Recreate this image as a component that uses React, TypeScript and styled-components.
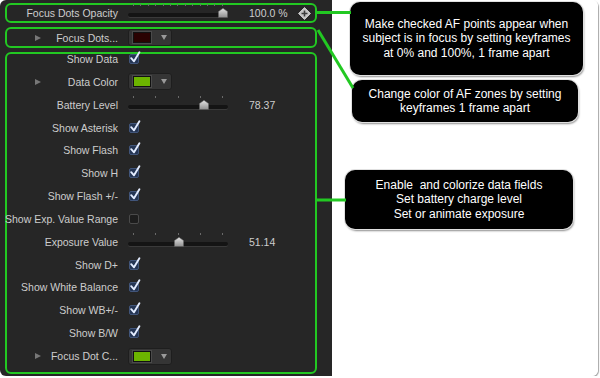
import React from "react";
import styled, { createGlobalStyle } from "styled-components";

const GREEN = "#22c822";

const GlobalStyle = createGlobalStyle`
  body {
    margin: 0;
    background: #fff;
    font-family: "Liberation Sans", Arial, sans-serif;
  }
`;

type TRow =
  | { label: string; kind: "check"; on: boolean }
  | { label: string; kind: "color"; color: string }
  | { label: string; kind: "slider"; value: number; ticks: number; text: string };

const dataRows: TRow[] = [
  { label: "Show Data", kind: "check", on: true },
  { label: "Data Color", kind: "color", color: "#6cb400" },
  { label: "Battery Level", kind: "slider", value: 78.37, ticks: 5, text: "78.37" },
  { label: "Show Asterisk", kind: "check", on: true },
  { label: "Show Flash", kind: "check", on: true },
  { label: "Show H", kind: "check", on: true },
  { label: "Show Flash +/-", kind: "check", on: true },
  { label: "Show Exp. Value Range", kind: "check", on: false },
  { label: "Exposure Value", kind: "slider", value: 51.14, ticks: 5, text: "51.14" },
  { label: "Show D+", kind: "check", on: true },
  { label: "Show White Balance", kind: "check", on: true },
  { label: "Show WB+/-", kind: "check", on: true },
  { label: "Show B/W", kind: "check", on: true },
  { label: "Focus Dot C...", kind: "color", color: "#6cb400" },
];

const Slider = ({ value, ticks }: { value: number; ticks: number }) => (
  <SliderWrap>
    <Ticks>
      {Array.from({ length: ticks }).map((_, i) => (
        <Tick key={"tick_" + i} />
      ))}
    </Ticks>
    <Track />
    <Thumb style={{ left: value * 0.9 }} viewBox="0 0 10 10" width={10} height={10}>
      <defs>
        <linearGradient id="thumbGrad" x1="0" y1="0" x2="0" y2="1">
          <stop offset="0" stopColor="#e4e4e4" />
          <stop offset="1" stopColor="#8e8e8e" />
        </linearGradient>
      </defs>
      <path d="M5 0.3 L9.6 3.6 V9.6 H0.4 V3.6 Z" fill="url(#thumbGrad)" stroke="#555" strokeWidth="0.5" />
    </Thumb>
  </SliderWrap>
);

const Checkbox = ({ on }: { on: boolean }) => (
  <CheckBox on={on}>
    {on && (
      <CheckMark viewBox="0 0 12 13" width={12} height={13}>
        <path d="M2.2 7.2 L5 10.3 L10.4 1.2" fill="none" stroke="#e3ecff" strokeWidth="1.9" strokeLinecap="round" strokeLinejoin="round" />
      </CheckMark>
    )}
  </CheckBox>
);

const ColorWell = ({ color }: { color: string }) => (
  <Well>
    <Swatch color={color} />
    <DropArrow />
  </Well>
);

const KeyframeButton = () => (
  <KeyIcon viewBox="0 0 13 13" width={13} height={13}>
    <path d="M6.5 0.5 L12.5 6.5 L6.5 12.5 L0.5 6.5 Z" fill="#c4c4c4" stroke="#c4c4c4" strokeLinejoin="round" />
    <path d="M6.5 3.5 V9.5 M3.5 6.5 H9.5" stroke="#3a3a3a" strokeWidth="1.6" />
  </KeyIcon>
);

const Control = ({ row }: { row: TRow }) => {
  if (row.kind === "check") return <Checkbox on={row.on} />;
  if (row.kind === "color") return <ColorWell color={row.color} />;
  return (
    <>
      <Slider value={row.value} ticks={row.ticks} />
      <Value>{row.text}</Value>
    </>
  );
};

const App = () => {
  return (
    <>
      <GlobalStyle />
      <Card>
        <Panel>
          <Group height={20}>
            <Row height={16}>
              <Label>Focus Dots Opacity</Label>
              <Controls>
                <Slider value={100} ticks={13} />
                <Value>100.0 %</Value>
                <KeyframeButton />
              </Controls>
            </Row>
          </Group>
          <Group height={21} top={4}>
            <Row height={17}>
              <Label>
                <Disclosure />
                Focus Dots...
              </Label>
              <Controls>
                <ColorWell color="#2a0202" />
              </Controls>
            </Row>
          </Group>
          <Group height={322} top={4}>
            <RowList>
              {dataRows.map(row => (
                <Row height={22.85} key={"data_row_" + row.label}>
                  <Label>
                    {row.kind === "color" && <Disclosure />}
                    {row.label}
                  </Label>
                  <Controls>
                    <Control row={row} />
                  </Controls>
                </Row>
              ))}
            </RowList>
          </Group>
        </Panel>
        <Notes>
          <Callout width={233} height={73} left={18} top={2}>
            Make checked AF points appear when
            <br />
            subject is in focus by setting keyframes
            <br />
            at 0% and 100%, 1 frame apart
          </Callout>
          <Callout width={226} height={42} left={20} top={5}>
            Change color of AF zones by setting
            <br />
            keyframes 1 frame apart
          </Callout>
          <Callout width={228} height={59} left={13} top={48}>
            {"Enable\u00a0 and colorize data fields"}
            <br />
            Set battery charge level
            <br />
            Set or animate exposure
          </Callout>
        </Notes>
        <Leaders width={598} height={376}>
          <line x1="316" y1="12.5" x2="351" y2="12.5" stroke={GREEN} strokeWidth="3" />
          <line x1="318" y1="30" x2="353" y2="88" stroke={GREEN} strokeWidth="3" />
          <line x1="316" y1="200" x2="346" y2="200" stroke={GREEN} strokeWidth="3" />
        </Leaders>
      </Card>
    </>
  );
};

const Card = styled.div`
  position: relative;
  display: flex;
  width: 598px;
  height: 376px;
  border-radius: 6px;
  overflow: hidden;
  box-shadow: 1px 1px 1px rgba(0, 0, 0, 0.35);
`;

const Panel = styled.div`
  width: 332px;
  flex-shrink: 0;
  box-sizing: border-box;
  padding: 3px 0 0 5px;
  background: #262626;
  display: flex;
  flex-direction: column;
`;

const Group = styled.div<{ height: number; top?: number }>`
  box-sizing: border-box;
  width: 312px;
  height: ${p => p.height}px;
  margin-top: ${p => p.top || 0}px;
  border: 2px solid ${GREEN};
  border-radius: 6px;
`;

const RowList = styled.div`
  margin-top: -6.4px;
  display: flex;
  flex-direction: column;
`;

const Row = styled.div<{ height: number }>`
  display: grid;
  grid-template-columns: 111px 1fr;
  column-gap: 10px;
  align-items: center;
  height: ${p => p.height}px;
  font-size: 10.5px;
  color: #cdcdcd;
`;

const Label = styled.div`
  display: flex;
  align-items: center;
  justify-content: flex-end;
  white-space: nowrap;
  position: relative;
`;

const Disclosure = styled.span`
  width: 0;
  height: 0;
  border-left: 6px solid #777;
  border-top: 3.5px solid transparent;
  border-bottom: 3.5px solid transparent;
  margin-left: 28px;
  margin-right: auto;
`;

const Controls = styled.div`
  display: flex;
  align-items: center;
  height: 100%;
`;

const SliderWrap = styled.div`
  position: relative;
  width: 100px;
  height: 10px;
`;

const Ticks = styled.div`
  position: absolute;
  left: 5px;
  right: 5px;
  top: -4px;
  display: flex;
  justify-content: space-between;
`;

const Tick = styled.span`
  width: 1px;
  height: 2px;
  background: #6a6a6a;
`;

const Track = styled.div`
  position: absolute;
  left: 0;
  right: 0;
  top: 5px;
  height: 4px;
  border-radius: 3px;
  background: #141414;
  box-shadow: 0 1px 0 #3a3a3a;
`;

const Thumb = styled.svg`
  position: absolute;
  top: 0;
`;

const Value = styled.span`
  margin-left: 21px;
  width: 49px;
  white-space: pre;
`;

const KeyIcon = styled.svg`
  margin-left: 0;
`;

const CheckBox = styled.span<{ on: boolean }>`
  position: relative;
  box-sizing: border-box;
  width: 10px;
  height: 10px;
  margin-left: 1px;
  border-radius: 2px;
  border: 1px solid ${p => (p.on ? "#41557a" : "#4a4a4a")};
  background: ${p => (p.on ? "#243554" : "#1d1d1d")};
`;

const CheckMark = styled.svg`
  position: absolute;
  left: -1px;
  top: -4px;
`;

const Well = styled.div`
  box-sizing: border-box;
  display: flex;
  align-items: center;
  width: 44px;
  height: 17px;
  padding-left: 4px;
  border-radius: 3px;
  background: #353535;
  border: 1px solid #1e1e1e;
`;

const Swatch = styled.span<{ color: string }>`
  box-sizing: border-box;
  width: 18px;
  height: 11px;
  background: ${p => p.color};
  border: 1px solid #111;
  box-shadow: 0 0 0 1px #4a4a4a;
`;

const DropArrow = styled.span`
  width: 0;
  height: 0;
  margin-left: 10px;
  border-top: 5px solid #9a9a9a;
  border-left: 3px solid transparent;
  border-right: 3px solid transparent;
`;

const Notes = styled.div`
  flex: 1;
  background: #fff;
  display: flex;
  flex-direction: column;
`;

const Callout = styled.div<{ width: number; height: number; left: number; top: number }>`
  box-sizing: border-box;
  width: ${p => p.width}px;
  height: ${p => p.height}px;
  margin: ${p => p.top}px 0 0 ${p => p.left}px;
  display: flex;
  align-items: center;
  justify-content: center;
  text-align: center;
  background: #000;
  color: #fff;
  font-size: 12px;
  line-height: 14.5px;
  border-radius: 10px;
  box-shadow: 0 0 0 1px #e0e0e0, 1px 2px 2px rgba(0, 0, 0, 0.45);
`;

const Leaders = styled.svg`
  position: absolute;
  left: 0;
  top: 0;
  pointer-events: none;
`;

export default App;
